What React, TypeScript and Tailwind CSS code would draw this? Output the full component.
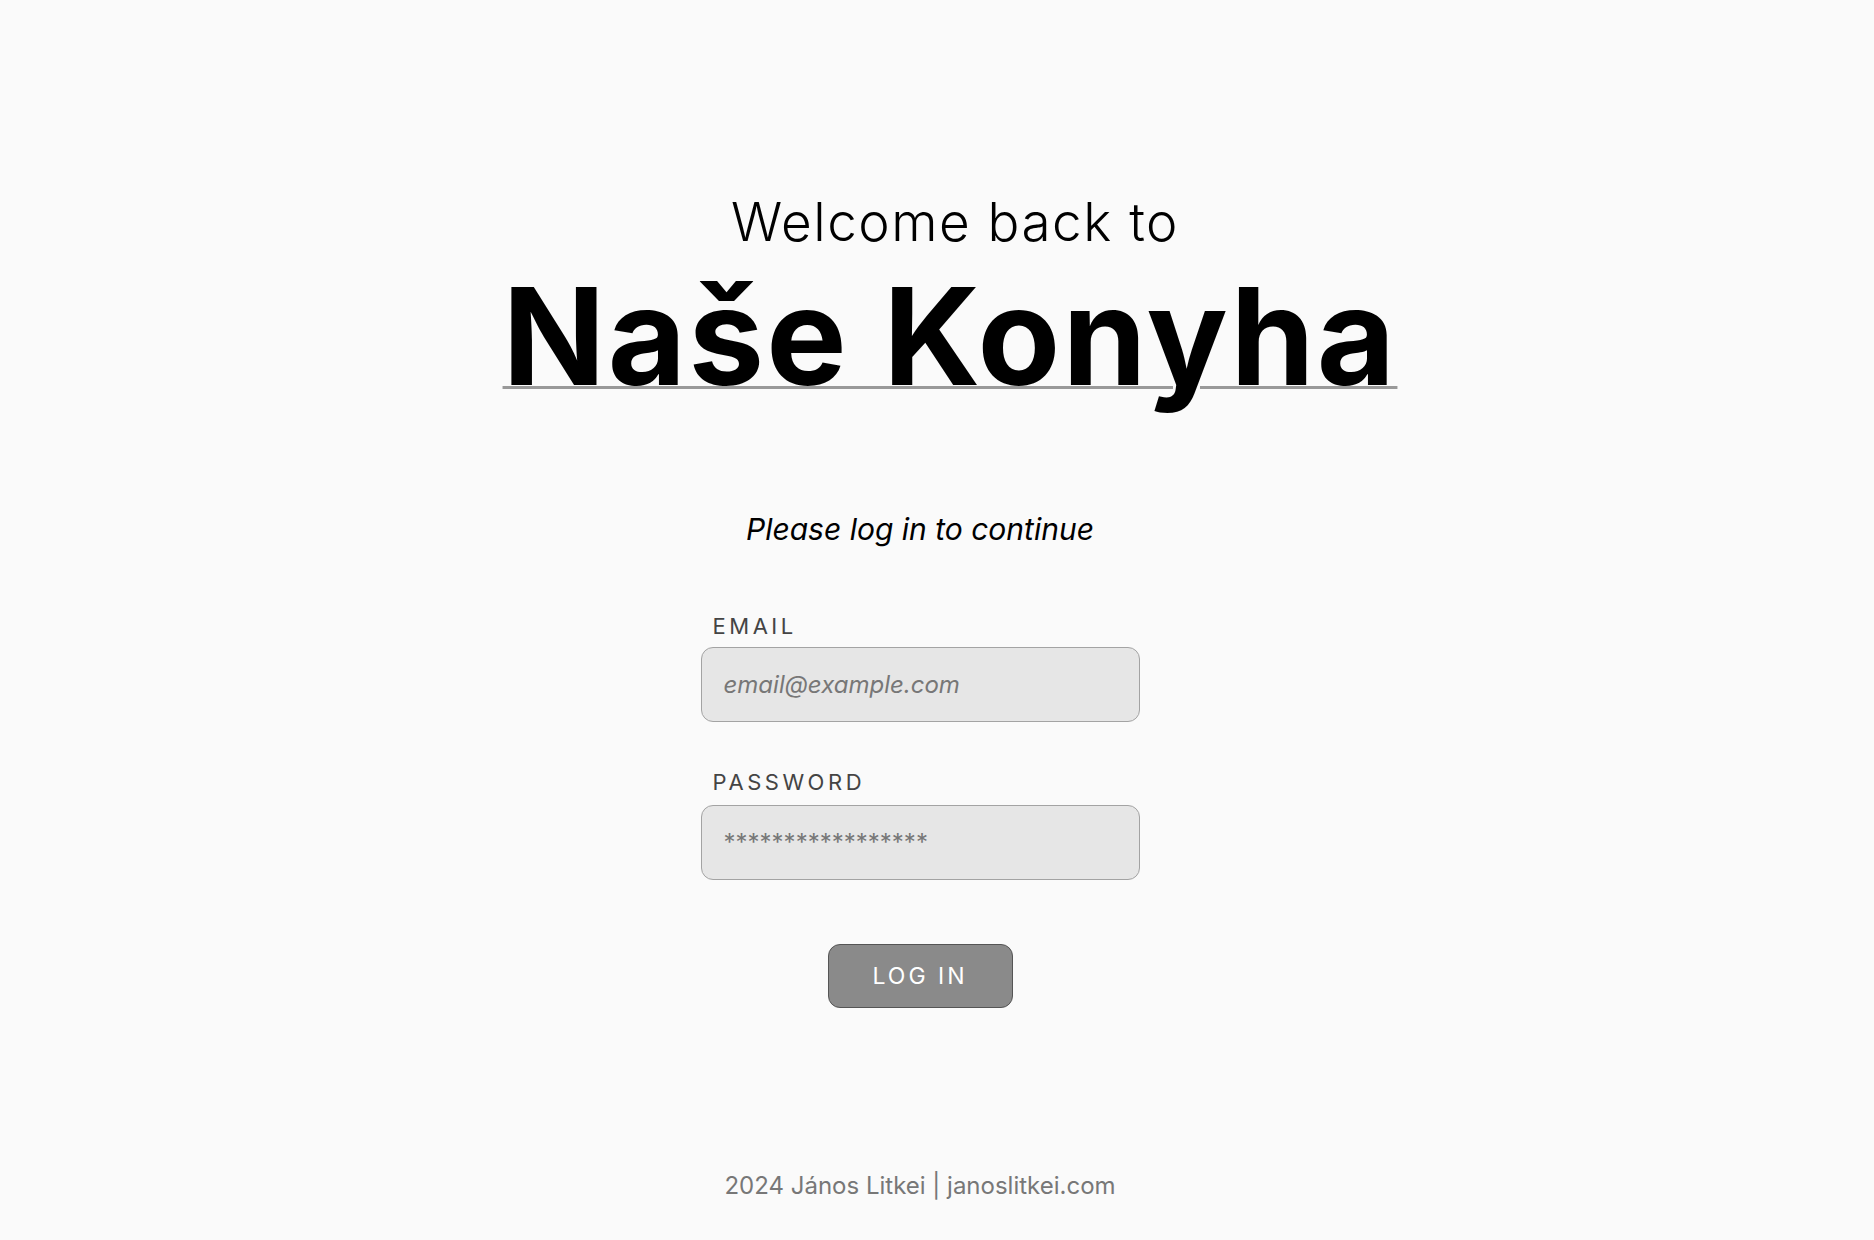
import { useState } from "react";

const body = "font-['Inter','Noto_Sans',sans-serif]";

export default function App() {
  const [email, setEmail] = useState("");
  const [password, setPassword] = useState("");

  return (
    <div className={`min-h-screen bg-[#fafafa] text-black flex flex-col items-center pr-[34px] ${body}`}>
      {/* heading */}
      <header className="flex flex-col items-center pl-[60px] pt-[196px]">
        <h2 className="ml-[10px] text-[53px] leading-none font-light tracking-[1.5px]">Welcome back to</h2>
        <h1 className="mt-[20px] text-[135px] leading-none font-bold tracking-[2.3px] underline decoration-[#999999] decoration-[3px] underline-offset-[1px]">
          Naše Konyha
        </h1>
      </header>

      <p className="mt-[110px] text-[30px] leading-none italic">Please log in to continue</p>

      <form className="mt-[71px] flex flex-col w-[439px]" onSubmit={(e) => e.preventDefault()}>
        <label htmlFor="email" className="pl-[12px] mb-[10px] text-[22px] leading-none tracking-[0.16em] text-[#444444]">
          EMAIL
        </label>
        <input
          id="email"
          type="email"
          value={email}
          placeholder="email@example.com"
          onChange={(e) => setEmail(e.target.value)}
          className="h-[75px] rounded-[12px] border border-[#a3a3a3] bg-[#e6e6e6] px-[22px] text-[24px] italic text-[#333333] placeholder:text-[#777777] outline-none"
        />

        <label htmlFor="password" className="mt-[49px] pl-[12px] mb-[12px] text-[22px] leading-none tracking-[0.16em] text-[#444444]">
          PASSWORD
        </label>
        <input
          id="password"
          type="password"
          value={password}
          placeholder="*****************"
          onChange={(e) => setPassword(e.target.value)}
          className="h-[75px] rounded-[12px] border border-[#a3a3a3] bg-[#e6e6e6] px-[22px] text-[24px] text-[#333333] placeholder:text-[#777777] outline-none"
        />

        <button
          type="submit"
          className="self-center mt-[64px] w-[185px] h-[64px] rounded-[12px] border border-[#555555] bg-[#8a8a8a] text-white text-[23px] tracking-[0.13em] leading-none"
        >
          LOG IN
        </button>
      </form>

      <footer className="mt-[166px] text-[24px] leading-none text-[#777777]">
        2024 János Litkei | janoslitkei.com
      </footer>
    </div>
  );
}
